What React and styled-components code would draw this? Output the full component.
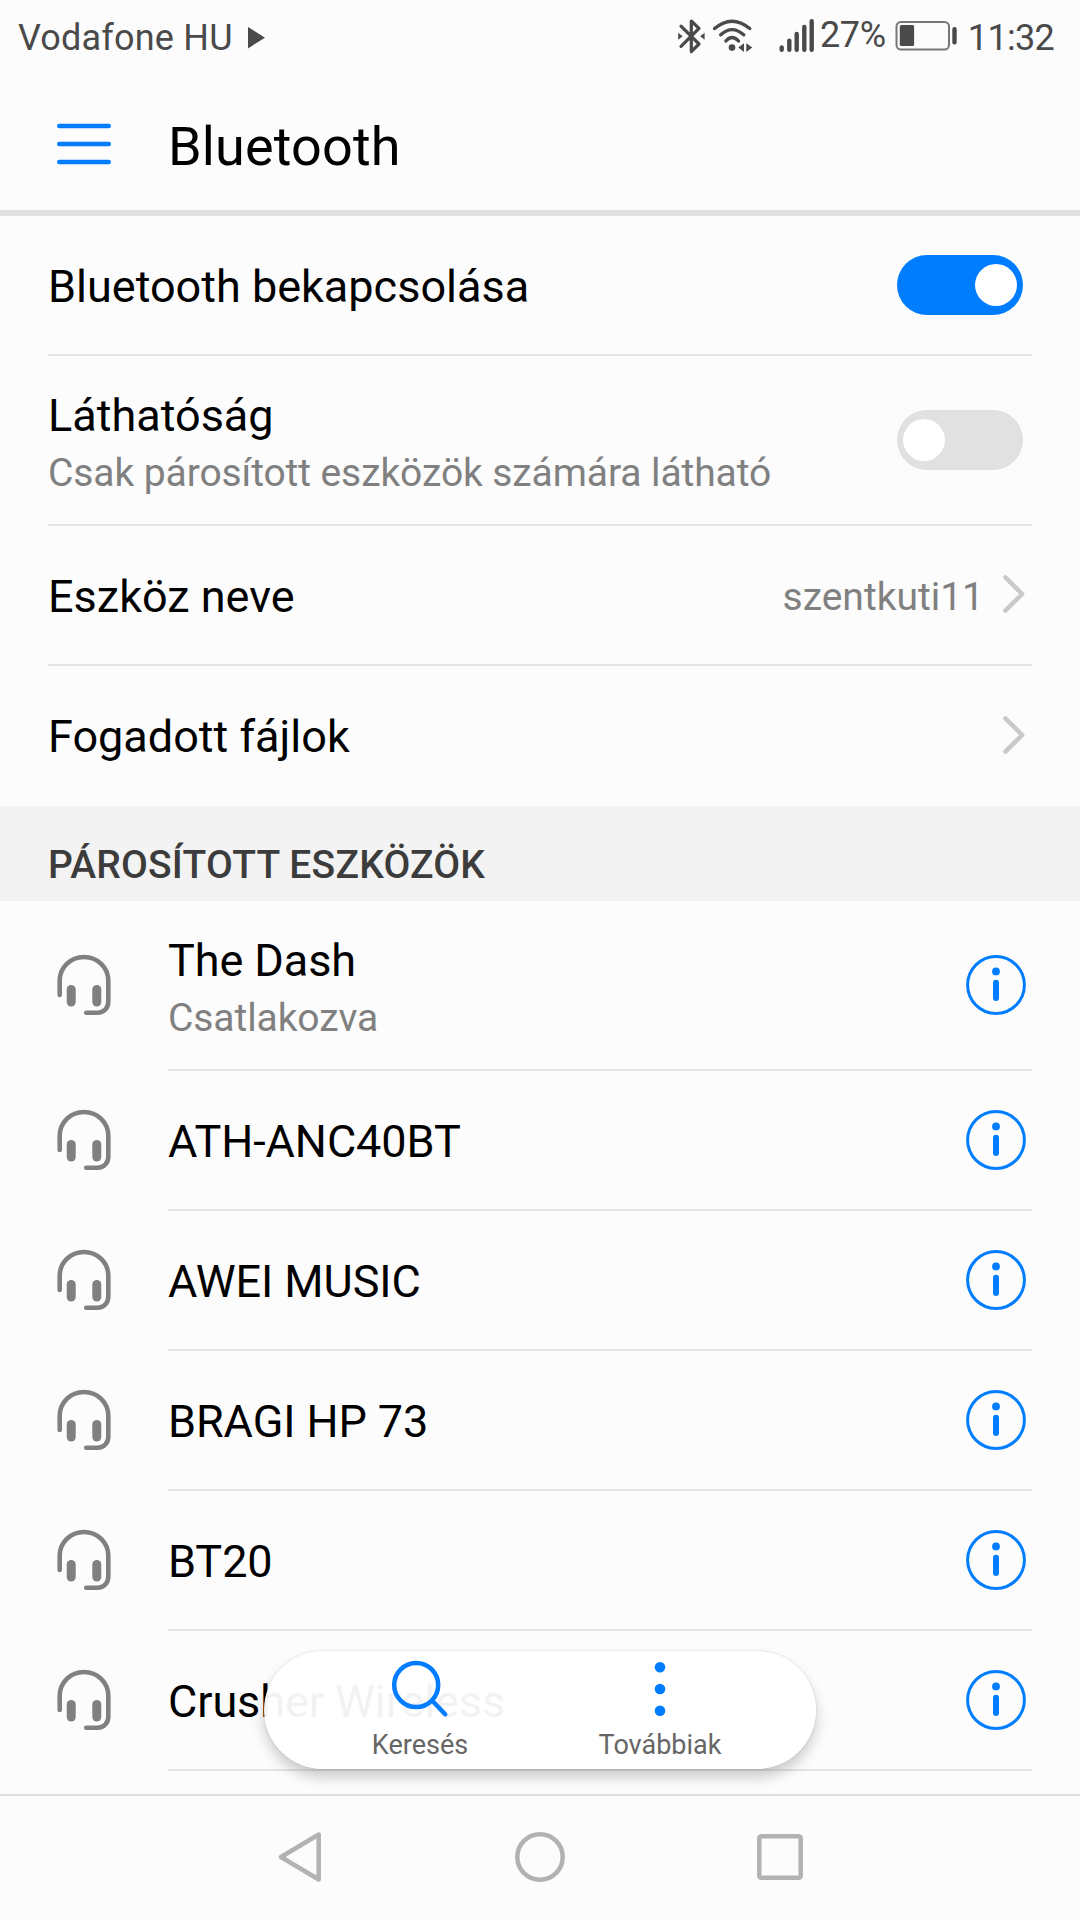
import React, { useState } from "react";
import styled, { createGlobalStyle } from "styled-components";

// styles
const GlobalStyle = createGlobalStyle`
	* {
		box-sizing: border-box;
	}

	body {
		margin: 0;
		background: #fcfcfc;
	}
`;

const Screen = styled.div`
	position: relative;
	display: flex;
	flex-direction: column;
	width: 1080px;
	height: 1920px;
	overflow: hidden;
	background: #fcfcfc;
	color: #000;
	font-family: Roboto, "Liberation Sans", sans-serif;
`;

const StatusBar = styled.div`
	display: flex;
	align-items: center;
	justify-content: space-between;
	height: 75px;
	padding: 0 26px 0 18px;
	color: #4a4a4a;
	font-size: 36px;
	line-height: 42px;
`;

const StatusGroup = styled.div`
	display: flex;
	align-items: center;
`;

const Carrier = styled.span`
	margin-right: 15px;
	letter-spacing: 0.2px;
`;

const StatusIcons = styled.svg`
	display: block;
	margin-top: -3px;
	margin-right: 5px;
`;

const Percent = styled.span`
	margin-top: -5px;
	margin-right: 9px;
	letter-spacing: -0.3px;
`;

const BatteryIcon = styled.svg`
	display: block;
	margin-top: -3px;
	margin-right: 11px;
`;

const Clock = styled.span`
	letter-spacing: -0.7px;
`;

const Header = styled.header`
	display: flex;
	align-items: center;
	height: 141px;
	padding: 3px 48px 0 57px;
	border-bottom: 6px solid #e1e1e1;
`;

const MenuButton = styled.button`
	display: block;
	width: 54px;
	height: 48px;
	margin-right: 57px;
	padding: 0;
	border: 0;
	background: none;
`;

const Title = styled.h1`
	margin: 5px 0 0;
	font-size: 54px;
	font-weight: 400;
	line-height: 64px;
	letter-spacing: 0.15px;
`;

const Content = styled.main`
	flex: 1;
	min-height: 0;
	overflow: hidden;
`;

const SettingRow = styled.div`
	display: flex;
	align-items: center;
	justify-content: space-between;
	height: ${({ $tall }) => ($tall ? 170 : 140)}px;
	margin: 0 48px;
	border-bottom: ${({ $last }) => ($last ? "0" : "2px solid #e4e4e4")};
`;

const Label = styled.p`
	margin: 0;
	padding-top: ${({ $flush }) => ($flush ? 0 : 2)}px;
	font-size: 45px;
	line-height: 53px;
`;

const TextBox = styled.div`
	padding-top: ${({ $double }) => ($double ? 2 : 0)}px;
`;

const Hint = styled.p`
	margin: 8px 0 0;
	color: #808080;
	font-size: 39px;
	line-height: 46px;
	letter-spacing: -0.09px;
`;

const ValueBox = styled.div`
	display: flex;
	align-items: center;
	gap: 19px;
	margin-right: 7px;
`;

const Value = styled.span`
	padding-top: 3px;
	color: #808080;
	font-size: 39px;
	line-height: 46px;
`;

const ChevronIcon = styled.svg`
	display: block;
	margin-top: -2px;
`;

const Switch = styled.button`
	display: flex;
	align-items: center;
	justify-content: ${({ $on }) => ($on ? "flex-end" : "flex-start")};
	width: 126px;
	height: 60px;
	margin-right: 9px;
	padding: 0 6px;
	border: 0;
	border-radius: 30px;
	background: ${({ $on }) => ($on ? "#007dff" : "#e1e1e1")};
`;

const Knob = styled.span`
	width: 42px;
	height: 42px;
	border-radius: 50%;
	background: #fff;
`;

const SectionTitle = styled.h2`
	height: 95px;
	margin: 0;
	padding: 36px 48px 0;
	background: #f3f3f3;
	color: #3c3c3c;
	font-size: 39px;
	font-weight: 500;
	line-height: 46px;
	letter-spacing: 0.2px;
`;

const DeviceRow = styled.div`
	display: flex;
	align-items: center;
	padding: 0 48px 0 57px;
`;

const DeviceIcon = styled.svg`
	flex: none;
	display: block;
	margin-top: -2px;
	margin-right: 57px;
`;

const DeviceBody = styled.div`
	flex: 1;
	display: flex;
	align-items: center;
	justify-content: space-between;
	height: ${({ $tall }) => ($tall ? 170 : 140)}px;
	padding-right: 6px;
	border-bottom: 2px solid #e4e4e4;
	letter-spacing: -0.08px;
`;

const ActionBar = styled.div`
	position: absolute;
	left: 264px;
	top: 1651px;
	display: flex;
	justify-content: center;
	width: 552px;
	height: 118px;
	border-radius: 59px;
	background: rgba(255, 255, 255, 0.95);
	box-shadow: 0 8px 14px rgba(0, 0, 0, 0.2), 0 0 2px rgba(0, 0, 0, 0.16);
`;

const Action = styled.button`
	display: flex;
	flex-direction: column;
	align-items: center;
	width: 240px;
	padding: 8px 0 0;
	border: 0;
	background: none;
	color: #666;
	font-family: inherit;
	font-size: 27px;
	line-height: 32px;
`;

const ActionIcon = styled.svg`
	display: block;
	margin-bottom: 10px;
`;

const NavBar = styled.nav`
	display: flex;
	align-items: center;
	justify-content: center;
	height: 126px;
	padding-bottom: 2px;
	border-top: 2px solid #e0e0e0;
`;

const NavButton = styled.button`
	display: flex;
	justify-content: center;
	width: 240px;
	padding: 0;
	border: 0;
	background: none;
`;

// icons
const Headset = () => (
	<DeviceIcon width='54' height='62' viewBox='0 0 54 62' fill='none'>
		<path
			d='M2.7 41V27C2.7 13.5 13.5 3 27 3S51.3 13.5 51.3 27v20.5C51.3 54 47 58.7 40.5 58.7H29.2'
			stroke='#808080'
			strokeWidth='4.6'
			strokeLinecap='round'
		/>
		<rect x='9.7' y='31' width='9' height='21.5' rx='4.5' fill='#808080' />
		<rect x='35.3' y='31' width='9' height='21.5' rx='4.5' fill='#808080' />
	</DeviceIcon>
);

const Info = () => (
	<svg width='60' height='60' viewBox='0 0 60 60' fill='#007dff'>
		<circle cx='30' cy='30' r='28.4' fill='none' stroke='#007dff' strokeWidth='3' />
		<circle cx='30' cy='16.4' r='3.9' />
		<rect x='27' y='24.8' width='6' height='21.2' rx='3' />
	</svg>
);

const Chevron = () => (
	<ChevronIcon width='22' height='38' viewBox='0 0 22 38' fill='none'>
		<path
			d='M2.4 2.4L19.2 19L2.4 35.6'
			stroke='#c9c9c9'
			strokeWidth='4.4'
			strokeLinecap='round'
			strokeLinejoin='round'
		/>
	</ChevronIcon>
);

const devices = [
	{ name: "The Dash", status: "Csatlakozva" },
	{ name: "ATH-ANC40BT" },
	{ name: "AWEI MUSIC" },
	{ name: "BRAGI HP 73" },
	{ name: "BT20" },
	{ name: "Crusher Wireless" },
];

export default function App() {
	const [enabled, setEnabled] = useState(true);
	const [visible, setVisible] = useState(false);

	return (
		<Screen>
			<GlobalStyle />
			<StatusBar>
				<StatusGroup>
					<Carrier>Vodafone HU</Carrier>
					<svg width='17' height='22' viewBox='0 0 17 22'>
						<path d='M0 0L17 10.7L0 21.4Z' fill='#4a4a4a' />
					</svg>
				</StatusGroup>
				<StatusGroup>
					<StatusIcons width='138' height='36' viewBox='0 0 138 36' fill='none' stroke='#4a4a4a'>
						{/* bluetooth */}
						<path
							d='M4 8.2L22 26L14.3 33.6V3L22 10.3L4 28.4'
							strokeWidth='3.2'
							strokeLinecap='round'
							strokeLinejoin='round'
						/>
						<path d='M1.2 14.8L5.6 18.3L1.2 21.8ZM27.6 14.8L23.2 18.3L27.6 21.8Z' fill='#4a4a4a' stroke='none' />
						{/* wifi */}
						<path
							d='M37.6 10.6Q55 -4.2 72.7 10.6M43.7 16.8Q55 6.4 66.7 16.8M48.9 23Q55 16 61.5 23'
							strokeWidth='3.3'
							strokeLinecap='round'
						/>
						<circle cx='55' cy='29.6' r='3.3' fill='#4a4a4a' stroke='none' />
						<path d='M67 25.2V34L61.3 29.6ZM69.3 25.2L75.3 29.6L69.3 34Z' fill='#4a4a4a' stroke='none' />
						{/* signal */}
						<path
							d='M104.7 29.4V31.8M112.3 22.6V31.8M119.7 16V31.8M127.3 9V31.8M134.7 3.2V31.8'
							strokeWidth='4.4'
							strokeLinecap='round'
						/>
					</StatusIcons>
					<Percent>27%</Percent>
					<BatteryIcon width='62' height='30' viewBox='0 0 62 30'>
						<rect x='1.5' y='1' width='52.5' height='27.5' rx='4.5' fill='none' stroke='#777' strokeWidth='2' />
						<rect x='4.8' y='4' width='14.3' height='21' rx='1.5' fill='#4a4a4a' />
						<rect x='57.3' y='6' width='4.4' height='17.5' rx='2' fill='#4a4a4a' />
					</BatteryIcon>
					<Clock>11:32</Clock>
				</StatusGroup>
			</StatusBar>
			<Header>
				<MenuButton aria-label='Menu'>
					<svg width='54' height='48' viewBox='0 0 54 48'>
						<path
							d='M2.3 6H51.7M2.3 24H51.7M2.3 42H51.7'
							stroke='#007dff'
							strokeWidth='4.6'
							strokeLinecap='round'
						/>
					</svg>
				</MenuButton>
				<Title>Bluetooth</Title>
			</Header>
			<Content>
				<SettingRow>
					<Label>Bluetooth bekapcsolása</Label>
					<Switch $on={enabled} onClick={() => setEnabled(!enabled)}>
						<Knob />
					</Switch>
				</SettingRow>
				<SettingRow $tall>
					<TextBox $double>
						<Label>Láthatóság</Label>
						<Hint>Csak párosított eszközök számára látható</Hint>
					</TextBox>
					<Switch $on={visible} onClick={() => setVisible(!visible)}>
						<Knob />
					</Switch>
				</SettingRow>
				<SettingRow>
					<Label>Eszköz neve</Label>
					<ValueBox>
						<Value>szentkuti11</Value>
						<Chevron />
					</ValueBox>
				</SettingRow>
				<SettingRow $last>
					<Label $flush>Fogadott fájlok</Label>
					<ValueBox>
						<Chevron />
					</ValueBox>
				</SettingRow>
				<SectionTitle>PÁROSÍTOTT ESZKÖZÖK</SectionTitle>
				{devices.map(({ name, status }) => (
					<DeviceRow key={name}>
						<Headset />
						<DeviceBody $tall={Boolean(status)}>
							<TextBox $double={Boolean(status)}>
								<Label>{name}</Label>
								{status && <Hint>{status}</Hint>}
							</TextBox>
							<Info />
						</DeviceBody>
					</DeviceRow>
				))}
			</Content>
			<ActionBar>
				<Action>
					<ActionIcon width='58' height='60' viewBox='0 0 58 60' fill='none' stroke='#007dff'>
						<circle cx='25.2' cy='26' r='22' strokeWidth='4.5' />
						<path d='M41.5 42L54.2 55.3' strokeWidth='4.5' strokeLinecap='round' />
					</ActionIcon>
					Keresés
				</Action>
				<Action>
					<ActionIcon width='12' height='60' viewBox='0 0 12 60' fill='#007dff'>
						<circle cx='6' cy='8.3' r='5.3' />
						<circle cx='6' cy='30' r='5.3' />
						<circle cx='6' cy='51.7' r='5.3' />
					</ActionIcon>
					Továbbiak
				</Action>
			</ActionBar>
			<NavBar>
				<NavButton aria-label='Back'>
					<svg width='44' height='50' viewBox='0 0 44 50' fill='none'>
						<path d='M40.7 2.5V47.5L3 25Z' stroke='#b2b2b2' strokeWidth='4.5' strokeLinejoin='round' />
					</svg>
				</NavButton>
				<NavButton aria-label='Home'>
					<svg width='50' height='50' viewBox='0 0 50 50' fill='none'>
						<circle cx='25' cy='25' r='22.7' stroke='#b2b2b2' strokeWidth='4.5' />
					</svg>
				</NavButton>
				<NavButton aria-label='Recent'>
					<svg width='46' height='46' viewBox='0 0 46 46' fill='none'>
						<rect x='2.3' y='2.3' width='41.4' height='41.4' rx='2' stroke='#b2b2b2' strokeWidth='4.5' />
					</svg>
				</NavButton>
			</NavBar>
		</Screen>
	);
}
